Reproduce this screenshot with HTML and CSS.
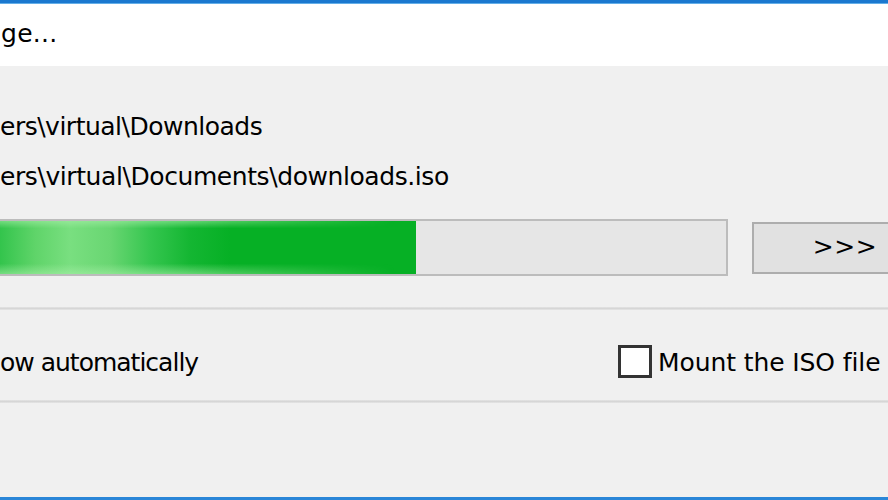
FILE: index.html
```html
<!DOCTYPE html>
<html lang="en">
<head>
<meta charset="utf-8">
<title>Creating ISO image</title>
<link rel="stylesheet" href="styles.css">
</head>
<body>
<div class="window">
  <header class="titlebar">
    <span class="txt title">ge...</span>
  </header>
  <main class="content">
    <div class="line"><span class="txt src">ers\virtual\Downloads</span></div>
    <div class="line line-dst"><span class="txt dst">ers\virtual\Documents\downloads.iso</span></div>
    <div class="progress-row">
      <div class="progress"><div class="fill"></div></div>
      <button class="more" type="button">&gt;&gt;&gt;</button>
    </div>
    <div class="sep"></div>
    <div class="options-row">
      <span class="txt auto">ow automatically</span>
      <label class="check"><span class="box"></span><span class="txt">Mount the ISO file</span></label>
    </div>
    <div class="sep sep-bottom"></div>
  </main>
</div>
</body>
</html>
```

FILE: styles.css
```css
* { box-sizing: border-box; }

html, body {
  margin: 0;
  padding: 0;
  width: 888px;
  height: 500px;
  overflow: hidden;
  background: #f0f0f0;
}

body {
  font-family: "DejaVu Sans", "Liberation Sans", sans-serif;
  font-size: 25px;
  line-height: 30px;
  color: #000;
}

.window {
  width: 888px;
  height: 500px;
  overflow: hidden;
  display: flex;
  flex-direction: column;
  border-top: 3px solid #1b78cf;
  border-bottom: 3px solid #2a86d8;
  background: #f0f0f0;
}

.titlebar {
  height: 63px;
  flex: none;
  background: #fff;
  padding: 16px 0 0 1px;
  box-shadow: inset 0 1px 0 #64aee8;
}

.txt {
  white-space: nowrap;
  letter-spacing: -0.1px;
}

.title { display: block; height: 30px; letter-spacing: 0.3px; }
.src { letter-spacing: -0.5px; }
.dst { letter-spacing: -0.42px; }

.content {
  flex: 1;
  display: flex;
  flex-direction: column;
  padding-top: 46px;
}

.line {
  height: 30px;
  flex: none;
  white-space: nowrap;
}

.line-dst { margin-top: 20px; }

.progress-row {
  display: flex;
  align-items: center;
  gap: 24px;
  margin-top: 27px;
  height: 57px;
  flex: none;
}

.progress {
  width: 728px;
  height: 57px;
  flex: none;
  background: #e6e6e6;
  border: 2px solid #bcbcbc;
  border-left: none;
}

.fill {
  position: relative;
  width: 416px;
  height: 100%;
  background: linear-gradient(to right,
    #33c44c 0px,
    #5fd469 35px,
    #79df80 70px,
    #69d672 110px,
    #35c64f 150px,
    #14b632 190px,
    #06b025 230px,
    #06b025 100%);
}

.fill::before {
  content: "";
  position: absolute;
  inset: 0;
  background: linear-gradient(to bottom,
    rgba(170, 240, 170, 0.55) 0,
    rgba(170, 240, 170, 0) 14%,
    rgba(170, 240, 170, 0) 80%,
    rgba(170, 240, 170, 0.55) 100%);
  -webkit-mask-image: linear-gradient(to right, #000 0, #000 45%, transparent 95%);
  mask-image: linear-gradient(to right, #000 0, #000 45%, transparent 95%);
}

.more {
  width: 186px;
  height: 52px;
  flex: none;
  margin: 0;
  padding: 0 0 2px 0;
  font: inherit;
  letter-spacing: 0.5px;
  color: #000;
  background: #e1e1e1;
  border: 2px solid #adadad;
  text-align: center;
}

.sep {
  height: 3px;
  flex: none;
  margin-top: 31px;
  background: linear-gradient(to bottom, #e4e4e4, #d6d6d6 50%, #e6e6e6);
}

.options-row {
  display: flex;
  align-items: center;
  margin-top: 34px;
  height: 34px;
  flex: none;
}

.auto {
  width: 198px;
  flex: none;
  padding-top: 3px;
  letter-spacing: -1px;
}

.check {
  display: flex;
  align-items: center;
  gap: 6px;
  margin-left: 420px;
  white-space: nowrap;
}

.check .txt { padding-top: 3px; }

.box {
  width: 34px;
  height: 33px;
  flex: none;
  background: #fff;
  border: 3px solid #333;
}

.sep-bottom {
  margin-top: 22px;
}
```
